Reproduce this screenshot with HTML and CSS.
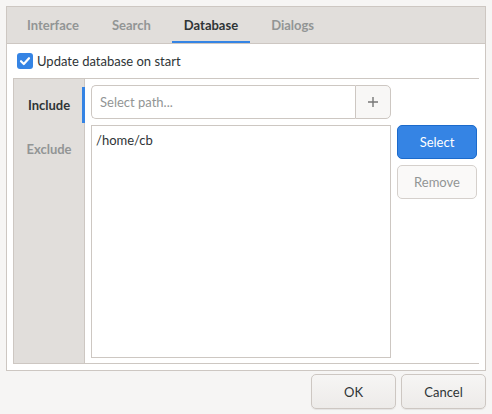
FILE: index.html
```html
<!DOCTYPE html>
<html>
<head>
<meta charset="utf-8">
<link rel="stylesheet" href="styles.css">
</head>
<body>
<div class="dialog">
  <div class="notebook">
    <div class="tabs">
      <div class="tab">Interface</div>
      <div class="tab">Search</div>
      <div class="tab active">Database</div>
      <div class="tab">Dialogs</div>
    </div>
    <div class="page">
      <label class="check-row">
        <span class="checkbox"><svg width="16" height="16" viewBox="0 0 16 16"><path d="M4 8.2 L6.8 11 L12 5.2" fill="none" stroke="#fff" stroke-width="2.2" stroke-linecap="round" stroke-linejoin="round"/></svg></span>
        <span class="check-label">Update database on start</span>
      </label>
      <div class="frame">
        <div class="sidebar">
          <div class="side-item active">Include</div>
          <div class="side-item">Exclude</div>
        </div>
        <div class="stack">
          <div class="entry-row">
            <div class="entry">Select path...</div>
            <div class="plus"><svg width="12" height="12" viewBox="0 0 12 12"><path d="M6 1v10M1 6h10" stroke="#777" stroke-width="1.4"/></svg></div>
          </div>
          <div class="list-row">
            <div class="list"><div class="list-item">/home/cb</div></div>
            <div class="side-buttons">
              <div class="btn suggested">Select</div>
              <div class="btn disabled">Remove</div>
            </div>
          </div>
        </div>
      </div>
    </div>
  </div>
  <div class="actions">
    <div class="btn action">OK</div>
    <div class="btn action">Cancel</div>
  </div>
</div>
</body>
</html>
```
FILE: styles.css
```css
html, body {
  margin: 0;
  padding: 0;
  background: #f6f5f4;
  font-family: "Lato", "Liberation Sans", sans-serif;
  font-size: 13px;
  color: #2e3436;
}
.dialog {
  width: 492px;
  height: 414px;
  padding: 6px 6px 0 6px;
  box-sizing: border-box;
  display: flex;
  flex-direction: column;
}
.notebook {
  border: 1px solid #cdc7c2;
  height: 365px;
  box-sizing: border-box;
  display: flex;
  flex-direction: column;
  background: #fff;
}
.tabs {
  display: flex;
  gap: 9px;
  padding-left: 8px;
  height: 37px;
  box-sizing: border-box;
  background: #e1dedb;
  border-bottom: 1px solid #cdc7c2;
}
.tab {
  padding: 0 12px;
  display: flex;
  align-items: center;
  font-weight: bold;
  color: #929595;
  border-bottom: 2px solid transparent;
  padding-top: 2px;
  box-sizing: border-box;
}
.tab.active {
  color: #2e3436;
  border-bottom-color: #3584e4;
}
.page {
  flex: 1;
  padding: 6px;
  display: flex;
  flex-direction: column;
  gap: 6px;
}
.check-row {
  height: 22px;
  display: flex;
  align-items: center;
  padding-left: 4px;
  gap: 4px;
}
.checkbox {
  width: 16px;
  height: 16px;
  border-radius: 3px;
  background: #3584e4;
  display: flex;
}
.frame {
  flex: 1;
  display: flex;
  border-top: 1px solid #cdc7c2;
  border-bottom: 1px solid #cdc7c2;
  border-left: 1px solid #cdc7c2;
}
.sidebar {
  width: 70px;
  background: #e1dedb;
  border-right: 1px solid #cdc7c2;
  padding-top: 4px;
}
.side-item {
  position: relative;
  height: 44px;
  display: flex;
  align-items: center;
  justify-content: center;
  font-weight: bold;
  color: #929595;
}
.side-item.active {
  color: #2e3436;
}
.side-item.active::after {
  content: "";
  position: absolute;
  right: -1px;
  top: 4px;
  bottom: 4px;
  width: 3px;
  background: #3584e4;
}
.stack {
  flex: 1;
  padding: 6px 2px 5px 6px;
  display: flex;
  flex-direction: column;
  gap: 6px;
}
.entry-row {
  display: flex;
  width: 300px;
  height: 34px;
}
.entry {
  flex: 1;
  border: 1px solid #cdc7c2;
  border-right: none;
  border-radius: 5px 0 0 5px;
  background: #fff;
  color: #929595;
  display: flex;
  align-items: center;
  padding-left: 8px;
}
.plus {
  width: 34px;
  border: 1px solid #cdc7c2;
  border-radius: 0 5px 5px 0;
  background: #f8f7f6;
  display: flex;
  align-items: center;
  justify-content: center;
}
.list-row {
  flex: 1;
  display: flex;
  gap: 6px;
}
.list {
  width: 300px;
  box-sizing: border-box;
  border: 1px solid #cdc7c2;
  background: #fff;
}
.list-item {
  padding: 4px 4px;
  height: 20px;
  display: flex;
  align-items: center;
}
.side-buttons {
  display: flex;
  flex-direction: column;
  gap: 6px;
}
.btn {
  width: 80px;
  height: 34px;
  box-sizing: border-box;
  border: 1px solid #cdc7c2;
  border-radius: 5px;
  display: flex;
  align-items: center;
  justify-content: center;
  background: linear-gradient(#f6f5f4, #edebe9);
}
.btn.suggested {
  background: #3584e4;
  border-color: #1b6acb;
  color: #fff;
}
.btn.disabled {
  background: #faf9f8;
  border-color: #d5d0cc;
  color: #929595;
}
.actions {
  display: flex;
  justify-content: flex-end;
  gap: 5px;
  padding-top: 3px;
}
.btn.action {
  width: 85px;
  height: 35px;
  box-shadow: 0 1px 1px rgba(0,0,0,0.07);
}
```
